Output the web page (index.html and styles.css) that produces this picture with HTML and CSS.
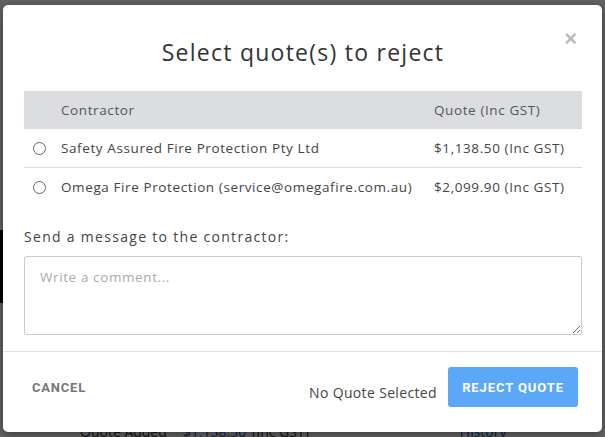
FILE: index.html
```html
<!DOCTYPE html>
<html>
<head>
<meta charset="utf-8">
<link rel="stylesheet" href="styles.css">
</head>
<body>
<div class="page">
  <div class="page-strip"></div>
  <div class="page-row">
    <span class="pr-label">Quote Added</span>
    <span class="pr-amount">$1,138.50</span>
    <span class="pr-inc">(Inc GST)</span>
    <span class="pr-history">History</span>
  </div>
</div>
<div class="overlay">
  <div class="modal">
    <button class="close" aria-label="Close">×</button>
    <h2 class="title">Select quote(s) to reject</h2>
    <div class="table">
      <div class="row head">
        <div class="cell"></div>
        <div class="cell">Contractor</div>
        <div class="cell">Quote (Inc GST)</div>
      </div>
      <div class="row line">
        <div class="cell"><span class="radio"></span></div>
        <div class="cell">Safety Assured Fire Protection Pty Ltd</div>
        <div class="cell">$1,138.50 (Inc GST)</div>
      </div>
      <div class="row">
        <div class="cell"><span class="radio"></span></div>
        <div class="cell">Omega Fire Protection (service@omegafire.com.au)</div>
        <div class="cell">$2,099.90 (Inc GST)</div>
      </div>
    </div>
    <label class="msg-label">Send a message to the contractor:</label>
    <textarea class="comment" placeholder="Write a comment..."></textarea>
    <div class="footer">
      <button class="cancel">CANCEL</button>
      <div class="right">
        <span class="status">No Quote Selected</span>
        <button class="reject">REJECT QUOTE</button>
      </div>
    </div>
  </div>
</div>
</body>
</html>
```
FILE: styles.css
```css
html, body {
  margin: 0;
  padding: 0;
  width: 605px;
  height: 437px;
  overflow: hidden;
  font-family: "Open Sans", "DejaVu Sans", sans-serif;
}
body {
  background: #fff;
  position: relative;
}
.page {
  position: absolute;
  inset: 0;
  background: #f4f4f4;
}
.page-strip {
  position: absolute;
  left: 0;
  top: 230px;
  width: 12px;
  height: 73px;
  background: #000;
}
.page-row {
  position: absolute;
  left: 80px;
  top: 422px;
  font-size: 14px;
  color: #333;
  display: flex;
  gap: 6px;
}
.pr-amount { color: #1a4fa0; margin-left: 10px; }
.pr-history { color: #1a4fa0; margin-left: 145px; }
.overlay {
  position: absolute;
  inset: 0;
  background: rgba(0, 0, 0, 0.6);
  padding: 5px 3px 0 3px;
}
.modal {
  position: relative;
  width: 599px;
  height: 427px;
  box-sizing: border-box;
  background: #fff;
  border-radius: 5px;
  padding: 0 20px 0 21px;
  display: flex;
  flex-direction: column;
  box-shadow: 0 2px 8px rgba(0,0,0,0.4);
}
.close {
  position: absolute;
  right: 25px;
  top: 22px;
  border: none;
  background: none;
  color: #bbb;
  font-size: 22px;
  font-weight: bold;
  font-family: "Liberation Sans", Arial, sans-serif;
  padding: 0;
  line-height: 24px;
  cursor: pointer;
}
.title {
  margin: 29px 0 21px;
  text-align: center;
  font-size: 23px;
  line-height: 36px;
  font-weight: 400;
  letter-spacing: 1.25px;
  color: #333;
}
.table {
  display: flex;
  flex-direction: column;
}
.row {
  display: grid;
  grid-template-columns: 37px 373px 1fr;
  height: 38px;
  align-items: center;
  font-size: 13.5px;
  letter-spacing: 0.6px;
  color: #444;
}
.row.head {
  background: #dcdde1;
  color: #555;
}
.row.line {
  border-bottom: 1px solid #ddd;
}
.cell {
  white-space: nowrap;
}
.radio {
  display: block;
  width: 11px;
  height: 11px;
  border: 1px solid #666;
  border-radius: 50%;
  margin-left: 9px;
  background: #fff;
}
.msg-label {
  margin-top: 21px;
  font-size: 14px;
  line-height: 20px;
  letter-spacing: 1.3px;
  color: #444;
}
.comment {
  margin-top: 9px;
  height: 79px;
  box-sizing: border-box;
  border: 1px solid #ccc;
  border-radius: 2px;
  padding: 11px 15px;
  font-family: inherit;
  font-size: 13.5px;
  letter-spacing: 0.6px;
  color: #444;
  resize: vertical;
}
.comment::placeholder {
  color: #aaa;
}
.footer {
  margin: 16px -20px 0 -21px;
  border-top: 1px solid #e5e5e5;
  padding: 15px 24px 0 29px;
  display: flex;
  justify-content: space-between;
  align-items: flex-start;
}
.cancel {
  border: none;
  background: none;
  padding: 0;
  margin-top: 13px;
  font-family: "Roboto", "Liberation Sans", sans-serif;
  font-weight: 700;
  font-size: 13px;
  color: #777;
  letter-spacing: 0.8px;
}
.right {
  display: flex;
  align-items: center;
  gap: 11px;
}
.status {
  font-size: 14px;
  color: #444;
  letter-spacing: 0.35px;
  padding-top: 10px;
}
.reject {
  width: 130px;
  height: 40px;
  border: none;
  border-radius: 3px;
  background: #5aa8f7;
  color: #fff;
  font-family: "Roboto", "Liberation Sans", sans-serif;
  font-weight: 700;
  font-size: 13px;
  letter-spacing: 0.9px;
  padding: 0;
}
```
